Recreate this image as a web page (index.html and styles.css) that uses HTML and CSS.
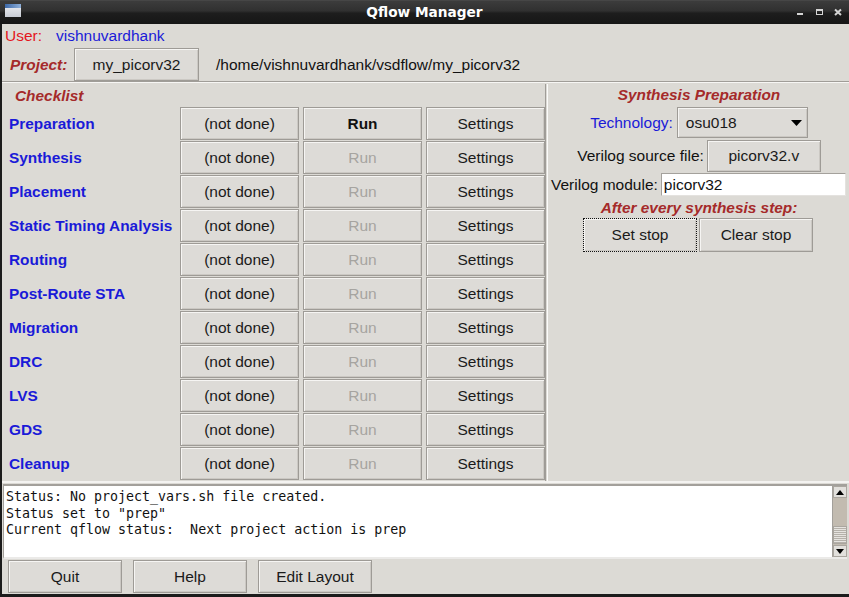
FILE: index.html
```html
<!DOCTYPE html>
<html>
<head>
<meta charset="utf-8">
<title>Qflow Manager</title>
<link rel="stylesheet" href="styles.css">
</head>
<body>
<div class="titlebar">
  <div class="wicon"><div class="wicon-top"></div></div>
  <div class="title">Qflow Manager</div>
  <svg class="wctl" width="54" height="24" viewBox="0 0 54 24">
    <rect x="5" y="13" width="6" height="2" fill="#d4d4d4"/>
    <rect x="24.5" y="9.5" width="6" height="5" fill="none" stroke="#d4d4d4" stroke-width="1"/>
    <rect x="24" y="9" width="7" height="2" fill="#d4d4d4"/>
    <path d="M43 9.5 L49 15 M49 9.5 L43 15" stroke="#d4d4d4" stroke-width="2"/>
  </svg>
</div>
<div class="window">
  <div class="user-row"><span class="user-lbl">User:</span><span class="user-name">vishnuvardhank</span></div>
  <div class="project-row">
    <span class="proj-lbl">Project:</span>
    <div class="btn proj-btn">my_picorv32</div>
    <span class="path">/home/vishnuvardhank/vsdflow/my_picorv32</span>
  </div>
  <div class="hsep"></div>
  <div class="panels">
    <div class="checklist">
      <div class="cl-title">Checklist</div>
      <div class="grid">
        <div class="step">Preparation</div><div class="btn">(not done)</div><div class="btn bold">Run</div><div class="btn">Settings</div>
        <div class="step">Synthesis</div><div class="btn">(not done)</div><div class="btn dim">Run</div><div class="btn">Settings</div>
        <div class="step">Placement</div><div class="btn">(not done)</div><div class="btn dim">Run</div><div class="btn">Settings</div>
        <div class="step">Static Timing Analysis</div><div class="btn">(not done)</div><div class="btn dim">Run</div><div class="btn">Settings</div>
        <div class="step">Routing</div><div class="btn">(not done)</div><div class="btn dim">Run</div><div class="btn">Settings</div>
        <div class="step">Post-Route STA</div><div class="btn">(not done)</div><div class="btn dim">Run</div><div class="btn">Settings</div>
        <div class="step">Migration</div><div class="btn">(not done)</div><div class="btn dim">Run</div><div class="btn">Settings</div>
        <div class="step">DRC</div><div class="btn">(not done)</div><div class="btn dim">Run</div><div class="btn">Settings</div>
        <div class="step">LVS</div><div class="btn">(not done)</div><div class="btn dim">Run</div><div class="btn">Settings</div>
        <div class="step">GDS</div><div class="btn">(not done)</div><div class="btn dim">Run</div><div class="btn">Settings</div>
        <div class="step">Cleanup</div><div class="btn">(not done)</div><div class="btn dim">Run</div><div class="btn">Settings</div>
      </div>
    </div>
    <div class="vsash"></div>
    <div class="prep">
      <div class="prep-title">Synthesis Preparation</div>
      <div class="tech-row">
        <span class="tech-lbl">Technology:</span>
        <div class="btn menubtn"><span>osu018</span><svg width="11" height="6" viewBox="0 0 11 6"><path d="M0 0 H11 L5.5 6 Z" fill="#000"/></svg></div>
      </div>
      <div class="src-row">
        <span>Verilog source file:</span>
        <div class="btn src-btn">picorv32.v</div>
      </div>
      <div class="mod-row">
        <span>Verilog module:</span>
        <div class="entry">picorv32</div>
      </div>
      <div class="after-row">After every synthesis step:</div>
      <div class="stop-row">
        <div class="btn stop-btn focus">Set stop</div>
        <div class="btn stop-btn">Clear stop</div>
      </div>
    </div>
  </div>
  <div class="hsep2"></div>
  <div class="console">
    <div class="text">Status: No project_vars.sh file created.
Status set to "prep"
Current qflow status:  Next project action is prep</div>
    <div class="scrollbar">
      <div class="sb-arrow"><svg width="8" height="5" viewBox="0 0 8 5"><path d="M0 5 H8 L4 0 Z" fill="#000"/></svg></div>
      <div class="sb-trough"></div>
      <div class="sb-thumb"></div>
      <div class="sb-arrow"><svg width="8" height="5" viewBox="0 0 8 5"><path d="M0 0 H8 L4 5 Z" fill="#000"/></svg></div>
    </div>
  </div>
  <div class="bottom-row">
    <div class="btn bot-btn">Quit</div>
    <div class="btn bot-btn">Help</div>
    <div class="btn bot-btn">Edit Layout</div>
  </div>
</div>
</body>
</html>
```
FILE: styles.css
```css
html, body {
  margin: 0;
  padding: 0;
}
body {
  width: 849px;
  height: 597px;
  overflow: hidden;
  background: #1b1b1b;
  font-family: "Liberation Sans", Arial, sans-serif;
  font-size: 15.5px;
  color: #111;
}

/* title bar */
.titlebar {
  height: 24px;
  display: grid;
  grid-template-columns: 1fr auto 1fr;
  align-items: center;
  background: linear-gradient(#505050 0, #3c3c3c 1px, #303030 45%, #1d1d1d 55%, #161616 100%);
}
.wicon {
  align-self: start;
  margin: 4px 0 0 5px;
  width: 16px;
  height: 13px;
  background: linear-gradient(#eef0f4, #c9cdd5);
}
.wicon-top {
  height: 4px;
  background: linear-gradient(to right, #3c68a8, #8fb0da);
}
.title {
  font-family: "DejaVu Sans", sans-serif;
  font-weight: bold;
  font-size: 13.7px;
  color: #fff;
}
.wctl {
  justify-self: end;
  margin-right: 3px;
}

/* main window */
.window {
  margin-left: 2px;
  width: 847px;
  height: 570px;
  background: #dcdad5;
  display: flex;
  flex-direction: column;
}

.btn {
  box-sizing: border-box;
  display: flex;
  align-items: center;
  justify-content: center;
  border: 1px solid #9e9b96;
  background: #dddbd7;
  box-shadow: inset 1px 1px 0 #f6f5f3, inset -1px -1px 0 #cbc8c3;
  color: #1a1a1a;
  white-space: nowrap;
}
.btn.bold { font-weight: bold; font-size: 15.4px; color: #111; }
.btn.dim { color: #a6a4a0; }
.btn.focus { border: 1px dotted #111; }

.user-row {
  height: 24px;
  display: flex;
  align-items: center;
  padding-left: 3px;
}
.user-lbl { width: 51px; color: #e4161c; }
.user-name { color: #1a1ad8; }

.project-row {
  height: 33px;
  display: flex;
  align-items: center;
  padding-left: 8px;
}
.proj-lbl {
  width: 64px;
  font-weight: bold;
  font-style: italic;
  font-size: 15.4px;
  color: #a52a2a;
}
.proj-btn { width: 125px; height: 33px; }
.path { margin-left: 17px; color: #111; }

.hsep {
  height: 1px;
  background: #a09d98;
  border-bottom: 1px solid #f7f6f4;
  margin-bottom: 1px;
}

.panels {
  height: 397px;
  display: flex;
}
.checklist {
  width: 543px;
  box-sizing: border-box;
  padding-left: 7px;
}
.cl-title {
  height: 23px;
  display: flex;
  align-items: center;
  padding-left: 6px;
  font-weight: bold;
  font-style: italic;
  font-size: 15.4px;
  color: #a52a2a;
}
.grid {
  display: grid;
  grid-template-columns: 167px 119px 119px 119px;
  grid-auto-rows: 33px;
  column-gap: 4px;
  row-gap: 1px;
}
.step {
  display: flex;
  align-items: center;
  font-weight: bold;
  font-size: 15.4px;
  color: #1a1ad8;
  white-space: nowrap;
}
.vsash {
  width: 4px;
  background: linear-gradient(to right, #a09d98 0 1px, transparent 1px 2px, #fbfbfa 2px 3px, transparent 3px);
}
.prep {
  flex: 1;
  display: flex;
  flex-direction: column;
}
.prep-title {
  height: 22px;
  display: flex;
  align-items: center;
  justify-content: center;
  font-weight: bold;
  font-style: italic;
  font-size: 15.4px;
  color: #a52a2a;
}
.tech-row {
  height: 31px;
  margin: 1px 0 2px;
  display: flex;
  align-items: center;
  justify-content: center;
  gap: 4px;
}
.tech-lbl { color: #1a1ad8; }
.menubtn {
  width: 131px;
  height: 31px;
  justify-content: space-between;
  padding: 0 5px 0 8px;
}
.src-row {
  height: 32px;
  display: flex;
  align-items: center;
  justify-content: center;
  gap: 3px;
}
.src-btn { width: 114px; height: 32px; }
.mod-row {
  height: 25px;
  display: flex;
  align-items: center;
  gap: 3px;
  padding: 0 3px 0 2px;
}
.entry {
  flex: 1;
  box-sizing: border-box;
  height: 23px;
  display: flex;
  align-items: center;
  padding-left: 2px;
  background: #fff;
  border: 1px solid #a4a19c;
  border-right-color: #e4e2df;
  border-bottom-color: #e4e2df;
}
.after-row {
  height: 21px;
  display: flex;
  align-items: center;
  justify-content: center;
  font-weight: bold;
  font-style: italic;
  font-size: 15.4px;
  color: #a52a2a;
}
.stop-row {
  display: flex;
  justify-content: center;
  gap: 2px;
  padding-right: 2px;
}
.stop-btn { width: 114px; height: 34px; }

.hsep2 {
  height: 2px;
  background: #f4f3f1;
  margin-bottom: 1px;
}
.console {
  height: 75px;
  box-sizing: border-box;
  margin: 0 2px 0 1px;
  display: flex;
  border-top: 2px solid #a3a09b;
  border-left: 1px solid #a3a09b;
  border-bottom: 2px solid #ebeae8;
}
.text {
  flex: 1;
  background: #fff;
  border-right: 1px solid #a3a09b;
  padding: 3px 0 0 2px;
  font-family: "DejaVu Sans Mono", monospace;
  font-size: 13.3px;
  line-height: 16.5px;
  white-space: pre;
  color: #111;
  overflow: hidden;
}
.scrollbar {
  width: 14px;
  display: flex;
  flex-direction: column;
  background: #c2bbb0;
}
.sb-arrow {
  height: 12px;
  box-sizing: border-box;
  display: flex;
  align-items: center;
  justify-content: center;
  background: #e2e0dc;
  border: 1px solid #aaa69f;
}
.sb-trough { flex: 1; }
.sb-thumb {
  height: 18px;
  box-sizing: border-box;
  border: 1px solid #aaa69f;
  background: repeating-linear-gradient(#e6e4e0 0 1px, #b5b1aa 1px 2px);
  margin-bottom: 1px;
}

.bottom-row {
  margin-top: 1px;
  height: 33px;
  display: flex;
  gap: 11px;
  padding-left: 6px;
}
.bot-btn { width: 114px; height: 33px; }
```
